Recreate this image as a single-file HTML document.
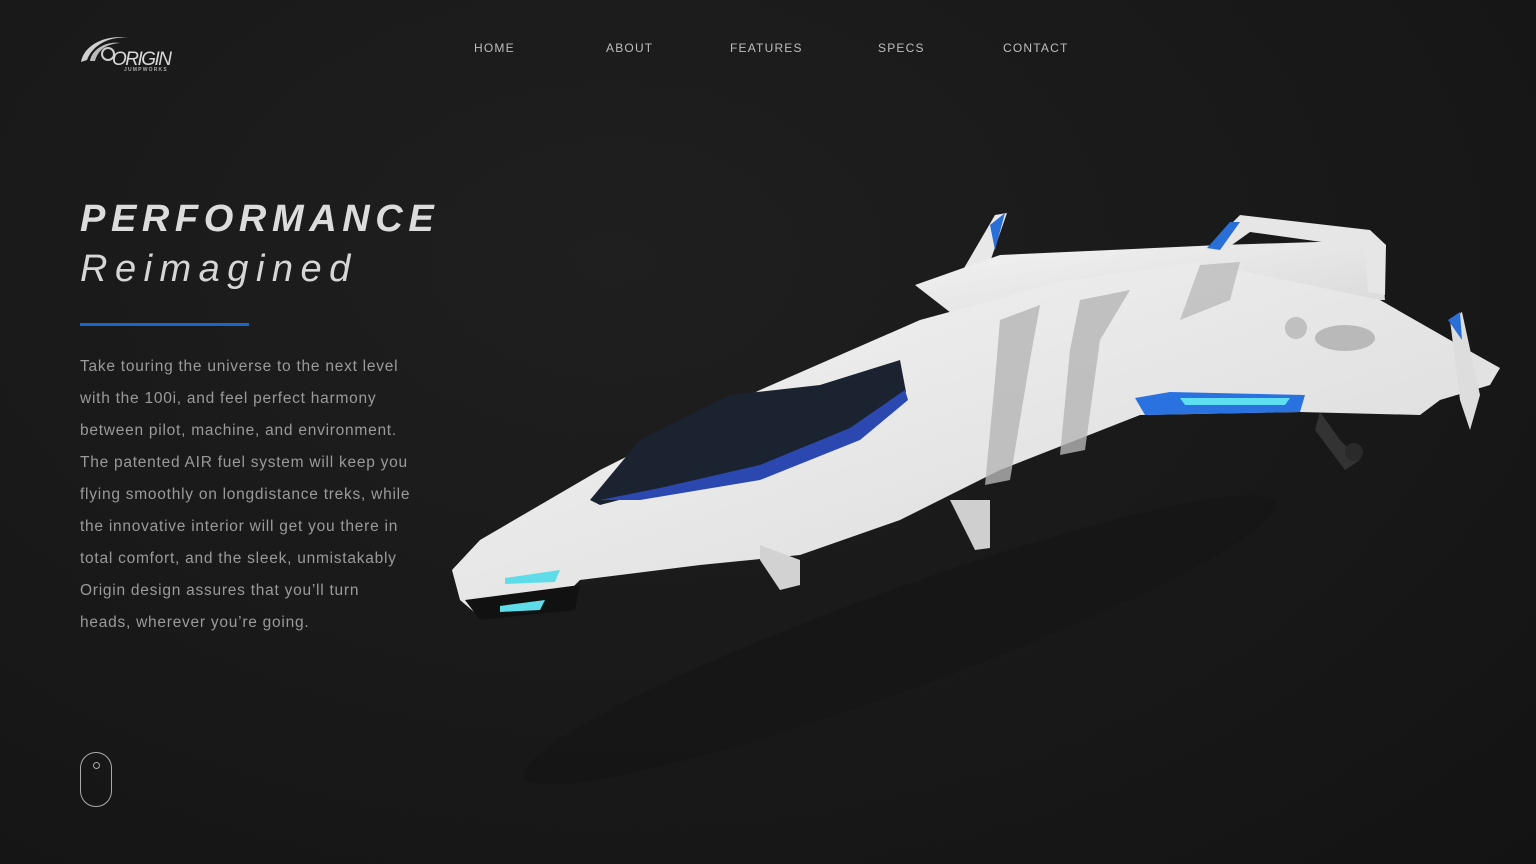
<!DOCTYPE html>
<html><head><meta charset="utf-8"><style>
html,body{margin:0;padding:0}
body{width:1536px;height:864px;overflow:hidden;background:radial-gradient(ellipse at 40% 30%,#1f1f1f,#171717 70%,#131313);font-family:"Liberation Sans",sans-serif;position:relative}
.nav a{position:absolute;top:41px;color:#bdbdbd;font-size:12px;letter-spacing:1.2px;text-decoration:none}
h1{position:absolute;left:80px;top:198px;margin:0;font-size:38px;font-weight:900;font-style:italic;letter-spacing:5.6px;color:#dcdcdc}
h2{position:absolute;left:80px;top:248px;margin:0;font-size:38px;font-weight:300;font-style:italic;letter-spacing:7.5px;color:#d6d6d6}
.bar{position:absolute;left:80px;top:323px;width:169px;height:3px;background:#1b66c9}
p{position:absolute;left:80px;top:351px;margin:0;white-space:nowrap;font-size:15.5px;line-height:32px;color:#9a9a9a;letter-spacing:0.75px}
.mouse{position:absolute;left:80px;top:752px;width:30px;height:53px;border:1.5px solid #aaa;border-radius:16px}
.mouse:after{content:"";position:absolute;left:12px;top:9px;width:5px;height:5px;border:1.3px solid #aaa;border-radius:50%}
</style></head><body>
<svg style="position:absolute;left:78px;top:32px" width="100" height="42" viewBox="0 0 100 42">
<path d="M3 30 C6 12 30 2 50 6 C36 4 16 10 9 28 Z" fill="#cfcfcf"/>
<path d="M12 29 C14 16 30 9 42 11 C28 12 20 18 17 29 Z" fill="#bbb"/>
<circle cx="30" cy="22" r="6" fill="none" stroke="#ccc" stroke-width="2"/>
<text x="34" y="33" font-family="Liberation Sans" font-style="italic" font-size="19" fill="#d8d8d8" textLength="60">ORIGIN</text>
<text x="46" y="39" font-family="Liberation Sans" font-size="5" font-weight="bold" fill="#aaa" letter-spacing="1.2">JUMPWORKS</text>
</svg>
<div class="nav"><a style="left:474px">HOME</a><a style="left:606px">ABOUT</a><a style="left:730px">FEATURES</a><a style="left:878px">SPECS</a><a style="left:1003px">CONTACT</a></div>
<h1>PERFORMANCE</h1>
<h2>Reimagined</h2>
<div class="bar"></div>
<p>Take touring the universe to the next level<br>with the 100i, and feel perfect harmony<br>between pilot, machine, and environment.<br>The patented AIR fuel system will keep you<br>flying smoothly on longdistance treks, while<br>the innovative interior will get you there in<br>total comfort, and the sleek, unmistakably<br>Origin design assures that you’ll turn<br>heads, wherever you’re going.</p>
<div class="mouse"></div>
<svg style="position:absolute;left:0;top:0" width="1536" height="864">
<defs><linearGradient id="g" x1="0" y1="0" x2="1" y2="1"><stop offset="0" stop-color="#f4f4f4"/><stop offset="1" stop-color="#d8d8d8"/></linearGradient></defs>
<ellipse cx="900" cy="640" rx="400" ry="50" fill="#111" opacity="0.35" transform="rotate(-20 900 640)"/>
<path d="M960 275 L995 215 L1007 213 L990 262 Z" fill="#e8e8e8"/>
<path d="M990 225 L1005 213 L995 250 Z" fill="#2a6fd6"/>
<path d="M915 285 L1000 255 L1220 245 L1380 240 L1385 300 L1200 300 L960 320 Z" fill="url(#g)"/>
<path d="M1205 250 L1240 215 L1370 230 L1386 245 L1385 295 L1368 292 L1365 248 L1250 232 L1222 252 Z" fill="#e6e6e6"/>
<path d="M1207 248 L1230 222 L1240 222 L1220 250 Z" fill="#2a6fd6"/>
<path d="M452 570 L480 540 L600 470 L760 390 L920 320 L1060 282 L1200 262 L1380 300 L1450 340 L1500 368 L1490 385 L1440 400 L1420 415 L1300 412 L1140 415 L1000 470 L900 520 L800 555 L700 565 L580 580 L560 600 L480 617 L460 600 Z" fill="url(#g)"/>
<path d="M1450 320 L1462 312 L1480 395 L1470 430 L1460 400 Z" fill="#ddd"/>
<path d="M1448 320 L1460 312 L1462 340 Z" fill="#2a6fd6"/>
<path d="M1000 320 L1040 305 L1030 360 L1010 480 L985 485 L995 380 Z" fill="#b5b5b5" opacity="0.8"/>
<path d="M1080 300 L1130 290 L1100 340 L1085 450 L1060 455 L1070 350 Z" fill="#b5b5b5" opacity="0.8"/>
<path d="M1200 265 L1240 262 L1230 300 L1180 320 Z" fill="#b5b5b5" opacity="0.7"/>
<ellipse cx="1345" cy="338" rx="30" ry="13" fill="#b9b9b9"/>
<circle cx="1296" cy="328" r="11" fill="#c0c0c0"/>
<path d="M590 500 L640 440 L730 395 L820 385 L900 360 L906 392 L850 430 L760 468 L650 492 L600 505 Z" fill="#1c2330"/>
<path d="M600 500 L660 488 L760 465 L850 428 L905 390 L908 400 L860 440 L760 480 L640 500 Z" fill="#2a48b0"/>
<path d="M1135 398 L1170 392 L1305 395 L1300 412 L1145 415 Z" fill="#2a72e0"/>
<path d="M1180 398 L1290 398 L1285 405 L1185 405 Z" fill="#5fe0f0"/>
<path d="M465 600 L580 585 L575 610 L480 620 Z" fill="#111"/>
<path d="M505 578 L560 570 L555 582 L505 584 Z" fill="#5fdcea"/>
<path d="M500 606 L545 600 L540 610 L500 612 Z" fill="#5fdcea"/>
<path d="M760 545 L800 560 L800 585 L780 590 L760 560 Z" fill="#d2d2d2"/>
<path d="M950 500 L990 500 L990 548 L975 550 Z" fill="#cfcfcf"/>
<path d="M1320 412 L1340 440 L1360 460 L1345 470 L1315 430 Z" fill="#333"/>
<circle cx="1354" cy="452" r="9" fill="#2a2a2a"/>
</svg>
</body></html>
